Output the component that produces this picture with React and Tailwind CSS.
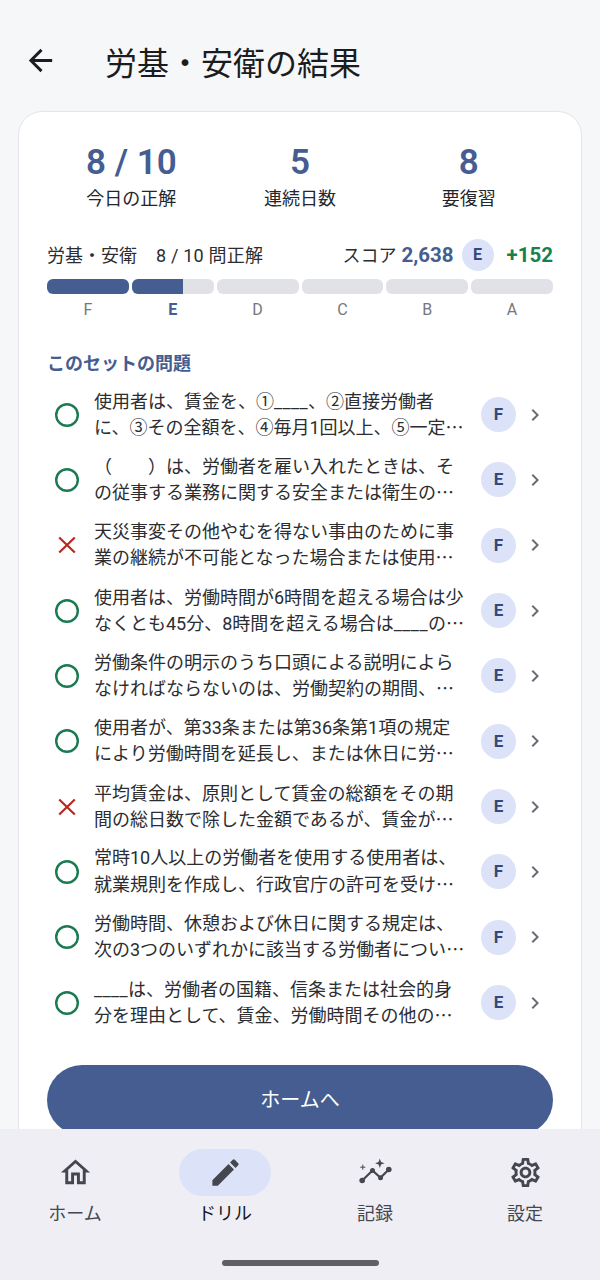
import React from "react";
import { MdArrowBack, MdChevronRight, MdOutlineHome, MdEdit, MdOutlineSettings } from "react-icons/md";

const rows = [
  { ok: true, g: "F", lh: "leading-[25px]", a: "使用者は、賃金を、①____、②直接労働者", b: "に、③その全額を、④毎月1回以上、⑤一定…" },
  { ok: true, g: "E", lh: "leading-[25px]", a: "（　　）は、労働者を雇い入れたときは、そ", b: "の従事する業務に関する安全または衛生の…" },
  { ok: false, g: "F", lh: "leading-[24px]", a: "天災事変その他やむを得ない事由のために事", b: "業の継続が不可能となった場合または使用…" },
  { ok: true, g: "E", lh: "leading-[25px]", a: "使用者は、労働時間が6時間を超える場合は少", b: "なくとも45分、8時間を超える場合は____の…" },
  { ok: true, g: "E", lh: "leading-[24px]", a: "労働条件の明示のうち口頭による説明によら", b: "なければならないのは、労働契約の期間、…" },
  { ok: true, g: "E", lh: "leading-[24.5px]", a: "使用者が、第33条または第36条第1項の規定", b: "により労働時間を延長し、または休日に労…" },
  { ok: false, g: "E", lh: "leading-[24px]", a: "平均賃金は、原則として賃金の総額をその期", b: "間の総日数で除した金額であるが、賃金が…" },
  { ok: true, g: "F", lh: "leading-[24.5px]", a: "常時10人以上の労働者を使用する使用者は、", b: "就業規則を作成し、行政官庁の許可を受け…" },
  { ok: true, g: "F", lh: "leading-[24px]", a: "労働時間、休憩および休日に関する規定は、", b: "次の3つのいずれかに該当する労働者につい…" },
  { ok: true, g: "E", lh: "leading-[24px]", a: "____は、労働者の国籍、信条または社会的身", b: "分を理由として、賃金、労働時間その他の…" },
];

const tiers = ["F", "E", "D", "C", "B", "A"];

function Line({ text }) {
  return (
    <div className="whitespace-nowrap">
      {text.split(/(____|…)/).map((part, i) =>
        part === "____" ? (
          <span key={i} className="tracking-[0.4px]">{part}</span>
        ) : part === "…" ? (
          <span key={i} className="font-['Noto_Sans_CJK_JP',sans-serif]">{part}</span>
        ) : (
          <span key={i}>{part}</span>
        )
      )}
    </div>
  );
}

function Stat({ value, label }) {
  return (
    <div className="flex flex-col items-center">
      <div className="text-[35px] leading-[42px] font-semibold text-[#455d91]">{value}</div>
      <div className="mt-[1px] text-[18px] leading-[28px] text-[#24262b]">{label}</div>
    </div>
  );
}

function Row({ r }) {
  return (
    <div className="flex h-[65.33px] items-center pl-2 pr-[6px]">
      <div className="flex w-[24px] shrink-0 items-center justify-center">
        {r.ok ? (
          <svg width="24" height="24" viewBox="0 0 24 24" fill="none">
            <circle cx="12" cy="12" r="10.8" stroke="#1b7a50" strokeWidth="2.4" />
          </svg>
        ) : (
          <svg width="24" height="24" viewBox="0 0 24 24" fill="none">
            <path d="M4.2 4.5 L19.8 19.5 M19.8 4.5 L4.2 19.5" stroke="#b8281f" strokeWidth="2.2" />
          </svg>
        )}
      </div>
      <div className={`ml-[15px] min-w-0 flex-1 text-[18px] text-[#2b2d31] ${r.lh}`}>
        <Line text={r.a} />
        <Line text={r.b} />
      </div>
      <div className="flex h-[35px] w-[35px] shrink-0 items-center justify-center rounded-full bg-[#dce3f8] text-[17px] font-bold text-[#34497a]">
        {r.g}
      </div>
      <MdChevronRight className="ml-[7px] shrink-0 text-[#696c73]" size={24} />
    </div>
  );
}

function GraphIcon() {
  return (
    <svg width="35" height="35" viewBox="0 0 35 35" className="text-[#44474f]">
      <path d="M4.2 25.5 L14.5 15.5 L22.5 22.8 L30.8 14.5" fill="none" stroke="currentColor" strokeWidth="2.2" />
      <circle cx="4.2" cy="25.5" r="2.8" fill="currentColor" />
      <circle cx="14.5" cy="15.5" r="2.5" fill="currentColor" />
      <circle cx="22.5" cy="22.8" r="2.5" fill="currentColor" />
      <circle cx="30.8" cy="14.5" r="2.8" fill="currentColor" />
      <path d="M21.8 3.5 L23 7 L26.5 8.2 L23 9.4 L21.8 12.9 L20.6 9.4 L17.1 8.2 L20.6 7 Z" fill="currentColor" />
      <path d="M4.8 9.7 V14.7 M2.3 12.2 H7.3" fill="none" stroke="currentColor" strokeWidth="1" />
    </svg>
  );
}

function NavItem({ icon, label, active }) {
  return (
    <div className="flex flex-col items-center">
      <div className={`flex h-[47px] w-[92px] items-center justify-center rounded-full ${active ? "bg-[#dce3f8]" : ""}`}>
        {icon}
      </div>
      <div className={`mt-[4px] text-[18px] leading-[28px] ${active ? "text-[#16181d]" : "text-[#44474f]"}`}>{label}</div>
    </div>
  );
}

export default function App() {
  return (
    <div lang="ja" className="flex h-[1280px] w-[600px] flex-col overflow-hidden bg-[#f6f7f9] font-['Roboto','Noto_Sans_CJK_JP',sans-serif]">
      <main className="min-h-0 flex-1 overflow-hidden">
        <header className="flex h-[111px] items-start pt-[42px] pl-[23px]">
          <MdArrowBack size={35} className="mt-[1px] text-[#1a1c20]" />
          <h1 className="ml-[47px] text-[32px] leading-[44px] font-normal text-[#1a1c20]">労基・安衛の結果</h1>
        </header>
        <section className="mx-[18px] rounded-[24px] border border-[#e3e5ea] bg-white px-[28px] pt-[30px] pb-[40px]">
          <div className="grid grid-cols-3">
            <Stat value="8 / 10" label="今日の正解" />
            <Stat value="5" label="連続日数" />
            <Stat value="8" label="要復習" />
          </div>
          <div className="mt-[26px] flex h-[32px] items-center">
            <span className="text-[18px] text-[#2b2d31]">労基・安衛</span>
            <span className="ml-[19px] flex-1 text-[18px] tracking-[0.2px] text-[#2b2d31]">8 / 10 問正解</span>
            <span className="text-[18px] text-[#2b2d31]">スコア</span>
            <span className="ml-[5px] text-[20.5px] font-bold text-[#455d91]">2,638</span>
            <span className="ml-[8px] flex h-[32px] w-[32px] items-center justify-center rounded-full bg-[#dce3f8] text-[16px] font-bold text-[#34497a]">E</span>
            <span className="ml-[13px] text-[20.5px] font-bold text-[#1a7f4b]">+152</span>
          </div>
          <div className="mt-[8px] grid grid-cols-6 gap-[3px]">
            {tiers.map((t, i) => (
              <div key={t} className="flex flex-col items-center">
                <div className="h-[15px] w-full overflow-hidden rounded-[6px] bg-[#e0e2e7]">
                  {i === 0 && <div className="h-full w-full bg-[#455d91]" />}
                  {i === 1 && <div className="h-full w-[63%] bg-[#455d91]" />}
                </div>
                <div className={`mt-[6px] text-[16px] leading-[20px] ${i === 1 ? "font-bold text-[#455d91]" : "text-[#74777e]"}`}>{t}</div>
              </div>
            ))}
          </div>
          <h2 className="mt-[30px] text-[18px] leading-[28px] font-bold text-[#455d91]">このセットの問題</h2>
          <div className="mt-[4px]">
            {rows.map((r, i) => (
              <Row key={i} r={r} />
            ))}
          </div>
          <button className="mt-[30px] flex h-[70px] w-full items-center justify-center rounded-full bg-[#455d91] text-[20px] text-white">
            ホームへ
          </button>
        </section>
      </main>
      <nav className="relative h-[151px] shrink-0 bg-[#eeeef4]">
        <div className="grid grid-cols-4 pt-[20px]">
          <NavItem icon={<MdOutlineHome size={35} className="text-[#44474f]" />} label="ホーム" />
          <NavItem icon={<MdEdit size={35} className="text-[#44474f]" />} label="ドリル" active />
          <NavItem icon={<GraphIcon />} label="記録" />
          <NavItem icon={<MdOutlineSettings size={35} className="text-[#44474f]" />} label="設定" />
        </div>
        <div className="absolute bottom-[14px] left-[222px] h-[6px] w-[157px] rounded-full bg-[#5f5f66]" />
      </nav>
    </div>
  );
}
